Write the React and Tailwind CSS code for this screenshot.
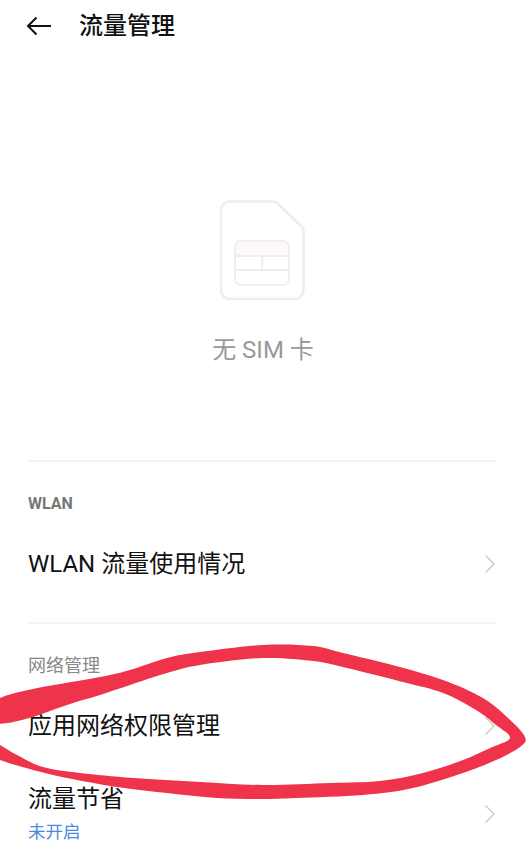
import React from 'react';
import { ChevronRight } from 'lucide-react';

const FONT = "font-['Roboto','Noto_Sans_CJK_SC',sans-serif]";

// outline of the hand-drawn red mark, traced edge by edge
const MARK = [
  [-6, 707], [0, 698], [33, 689], [100, 677], [130, 670], [167, 658], [200, 652], [263, 645],
  [313, 646], [343, 653], [396, 666], [443, 680], [483, 698], [508, 718], [525, 737], [520, 747],
  [496, 760], [463, 773], [413, 788], [363, 795], [296, 798], [263, 799], [217, 798], [167, 793],
  [117, 787], [67, 778], [33, 770], [0, 760], [-8, 755], [-8, 742], [0, 745], [17, 755], [43, 767],
  [80, 773], [133, 778], [200, 782], [263, 785], [330, 783], [380, 781], [423, 773], [463, 760],
  [490, 748], [510, 738], [496, 725], [476, 710], [443, 693], [403, 682], [343, 667], [313, 661],
  [263, 658], [200, 665], [167, 673], [130, 685], [100, 695], [67, 705], [33, 717], [7, 723], [-6, 722],
];

function smoothPath(pts) {
  const n = pts.length;
  let d = `M${pts[0][0]} ${pts[0][1]}`;
  for (let i = 0; i < n; i++) {
    const p0 = pts[(i - 1 + n) % n];
    const p1 = pts[i];
    const p2 = pts[(i + 1) % n];
    const p3 = pts[(i + 2) % n];
    const c1x = p1[0] + (p2[0] - p0[0]) / 6;
    const c1y = p1[1] + (p2[1] - p0[1]) / 6;
    const c2x = p2[0] - (p3[0] - p1[0]) / 6;
    const c2y = p2[1] - (p3[1] - p1[1]) / 6;
    d += `C${c1x} ${c1y} ${c2x} ${c2y} ${p2[0]} ${p2[1]}`;
  }
  return d + 'Z';
}

function SimIcon() {
  return (
    <svg width="86" height="102" viewBox="0 0 86 102" fill="none" stroke="#eeeeee" strokeWidth="2.5">
      <path d="M10 1.5h44a4 4 0 0 1 3 1.3L82 27a4 4 0 0 1 1.5 3v60a9 9 0 0 1-9 9H10a9 9 0 0 1-9-9V10.5a9 9 0 0 1 9-9z" />
      <path d="M21 41h42a6 6 0 0 1 6 6v9H15v-9a6 6 0 0 1 6-6z" fill="#fdf9fb" stroke="none" />
      <rect x="15" y="41" width="54" height="44" rx="6" stroke="#f1eced" strokeWidth="1.8" />
      <path d="M15 56h54M15 70h54M42.3 56V70" stroke="#f1eced" strokeWidth="1.8" />
    </svg>
  );
}

function Row({ title, sub }) {
  return (
    <div className="flex items-center justify-between">
      <div>
        <div className="text-[24px] leading-[32px] text-[#111]">{title}</div>
        {sub && <div className="mt-[5px] text-[17.5px] leading-[24px] text-[#4a8ae0]">{sub}</div>}
      </div>
      <ChevronRight size={32} strokeWidth={1.3} className="text-[#cfcfcf] -mr-[10px]" />
    </div>
  );
}

export default function App() {
  return (
    <div className={`relative w-[526px] h-[857px] overflow-hidden bg-white ${FONT}`}>
      <header className="flex items-center h-[52px] pl-[26px] gap-[27px]">
        <svg width="26" height="20" viewBox="0 0 26 20" fill="none" stroke="#111" strokeWidth="2">
          <path d="M25 10H2M10.5 1.5 2 10l8.5 8.5" />
        </svg>
        <h1 className="text-[24px] font-medium text-[#111]">流量管理</h1>
      </header>

      <section className="flex flex-col items-center pt-[148px] h-[408px]">
        <SimIcon />
        <p className="mt-[31px] text-[24px] leading-[34px] text-[#999]">无 SIM 卡</p>
      </section>

      <div className="ml-[28px] mr-[30px] border-t-2 border-[#f6f3f4]" />

      <div className="pl-[28px] pr-[30px]">
        <div className="pt-[30px] text-[16px] leading-[24px] font-bold text-[#777]">WLAN</div>
        <div className="mt-[32px]"><Row title="WLAN 流量使用情况" /></div>
      </div>

      <div className="ml-[28px] mr-[30px] mt-[42px] border-t-2 border-[#f6f3f4]" />

      <div className="pl-[28px] pr-[30px]">
        <div className="pt-[30px] text-[18px] leading-[24px] text-[#888]">网络管理</div>
        <div className="mt-[32px]"><Row title="应用网络权限管理" /></div>
        <div className="mt-[41px]"><Row title="流量节省" sub="未开启" /></div>
      </div>

      <svg className="absolute inset-0 pointer-events-none" width="526" height="857" viewBox="0 0 526 857">
        <path d={smoothPath(MARK)} fill="#ee334a" />
      </svg>
    </div>
  );
}
